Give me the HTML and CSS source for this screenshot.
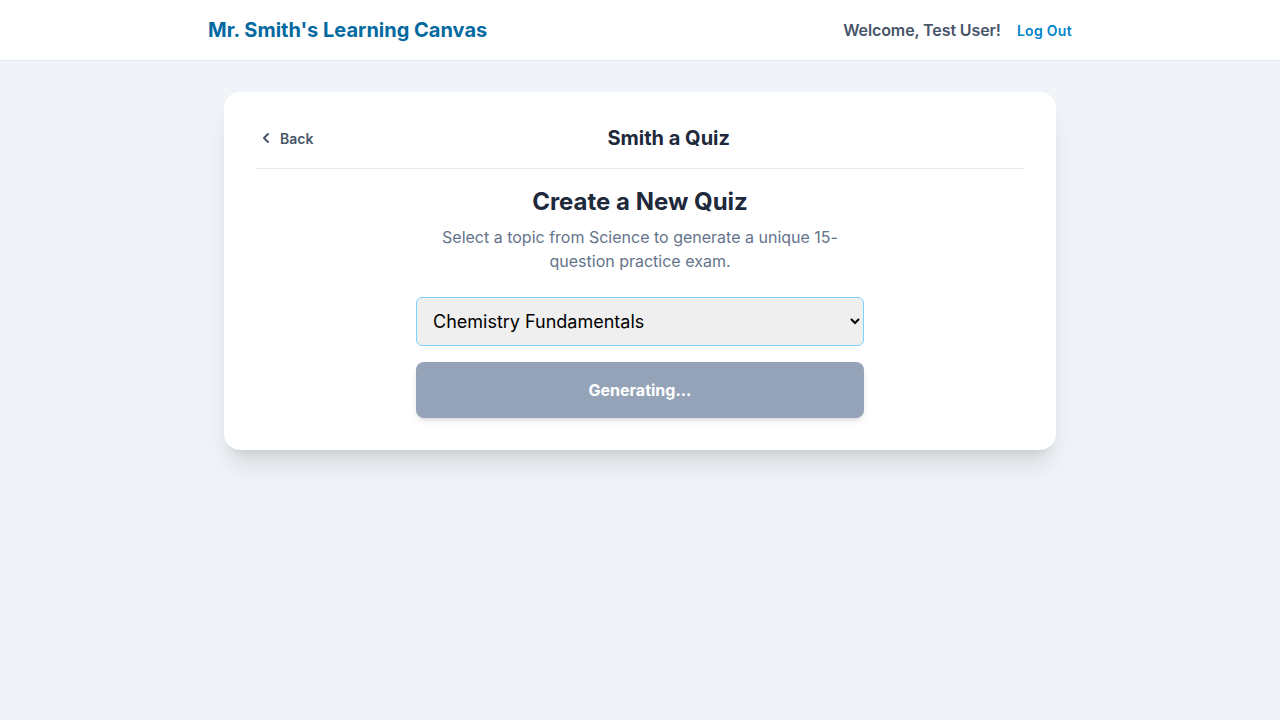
FILE: index.html
```html
<!DOCTYPE html>
<html lang="en">
<head>
<meta charset="utf-8">
<title>Mr. Smith's Learning Canvas</title>
<link rel="stylesheet" href="styles.css">
</head>
<body>
<header class="topbar">
  <div class="topbar-inner">
    <h1 class="brand">Mr. Smith's Learning Canvas</h1>
    <div class="user">
      <span class="welcome">Welcome, Test User!</span>
      <a class="logout" href="#">Log Out</a>
    </div>
  </div>
</header>
<main class="main">
  <section class="card">
    <div class="card-head">
      <button class="back" type="button">
        <svg width="16" height="16" viewBox="0 0 24 24" fill="none" stroke="currentColor" stroke-width="3" stroke-linecap="round" stroke-linejoin="round"><path d="M15 18l-6-6 6-6"/></svg>
        <span>Back</span>
      </button>
      <h2 class="card-title">Smith a Quiz</h2>
    </div>
    <div class="create">
      <h3 class="create-title">Create a New Quiz</h3>
      <p class="create-desc">Select a topic from Science to generate a unique 15-question practice exam.</p>
      <select class="topic">
        <option>Chemistry Fundamentals</option>
      </select>
      <button class="generate" type="button" disabled>Generating...</button>
    </div>
  </section>
</main>
</body>
</html>
```

FILE: styles.css
```css
* { box-sizing: border-box; }
html, body { margin: 0; padding: 0; }
body {
  font-family: Inter, "Noto Sans", "Liberation Sans", sans-serif;
  background: #f0f4f8;
  min-height: 720px;
  color: #1e293b;
}
.topbar {
  background: #ffffff;
  border-bottom: 1px solid #e2e8f0;
  height: 61px;
}
.topbar-inner {
  max-width: 896px;
  margin: 0 auto;
  padding: 0 16px;
  height: 60px;
  display: flex;
  align-items: center;
  justify-content: space-between;
}
.brand {
  margin: 0;
  font-size: 20px;
  line-height: 28px;
  font-weight: 700;
  color: #0369a1;
}
.user {
  display: flex;
  align-items: center;
  gap: 16px;
}
.welcome {
  font-size: 16px;
  font-weight: 600;
  color: #475569;
  letter-spacing: -0.1px;
}
.logout {
  font-size: 14px;
  font-weight: 600;
  color: #0284c7;
  text-decoration: none;
  letter-spacing: 0.3px;
}
.main {
  padding-top: 31px;
  display: flex;
  justify-content: center;
}
.card {
  width: 832px;
  background: #ffffff;
  border-radius: 16px;
  padding: 32px;
  box-shadow: 0 20px 25px -5px rgba(0,0,0,0.1), 0 8px 10px -6px rgba(0,0,0,0.1);
}
.card-head {
  display: flex;
  align-items: center;
  padding-bottom: 16px;
  border-bottom: 1px solid #e2e8f0;
}
.back {
  display: flex;
  align-items: center;
  gap: 6px;
  background: none;
  border: 0;
  padding: 0 0 0 2px;
  font-family: inherit;
  font-size: 14px;
  font-weight: 600;
  color: #475569;
  cursor: pointer;
}
.back svg { display: block; }
.card-title {
  flex: 1;
  margin: 0;
  text-align: center;
  font-size: 20px;
  line-height: 28px;
  font-weight: 700;
  color: #1e293b;
}
.create {
  max-width: 448px;
  margin: 16px auto 0;
  display: flex;
  flex-direction: column;
  align-items: stretch;
  text-align: center;
}
.create-title {
  margin: 0;
  font-size: 24px;
  line-height: 33px;
  font-weight: 700;
  color: #1e293b;
}
.create-desc {
  margin: 7px 0 0;
  font-size: 16px;
  line-height: 24px;
  color: #64748b;
}
.topic {
  margin-top: 24px;
  height: 49px;
  padding: 0 8px 0 12px;
  font-family: inherit;
  font-size: 18px;
  color: #000000;
  background-color: #efefef;
  border: 1px solid #7dd3fc;
  border-radius: 6px;
}
.generate {
  margin-top: 16px;
  height: 56px;
  border: 0;
  border-radius: 8px;
  background: #94a3b8;
  color: #ffffff;
  font-family: inherit;
  font-size: 16px;
  font-weight: 700;
  box-shadow: 0 4px 6px -1px rgba(0,0,0,0.1), 0 2px 4px -2px rgba(0,0,0,0.1);
}
```
